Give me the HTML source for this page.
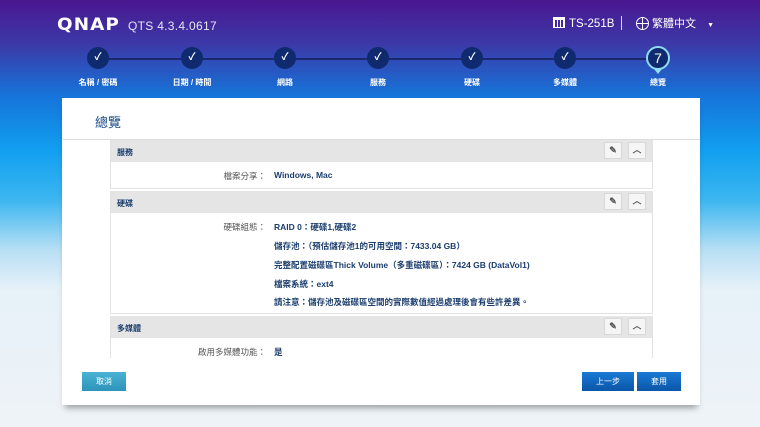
<!DOCTYPE html>
<html><head><meta charset="utf-8"><style>
*{margin:0;padding:0;box-sizing:border-box}
body{width:760px;height:427px;overflow:hidden;position:relative;font-family:"Liberation Sans","Noto Sans CJK TC",sans-serif;
background:linear-gradient(180deg,#4a1690 0px,#3b3aa8 45px,#1673d9 95px,#119ff0 150px,#3cb6f0 200px,#b8dff4 250px,#e6f1f8 290px,#eef3f7 427px)}
.logo{position:absolute;left:57px;top:15px;color:#fff;font-weight:900;font-size:17px;letter-spacing:1px;font-family:"DejaVu Sans",sans-serif;transform:scaleX(1.08);transform-origin:left}
.ver{position:absolute;left:128px;top:19px;color:#e6e6f5;font-size:12px;letter-spacing:.3px}
.model{position:absolute;left:553px;top:17px;color:#fff;font-size:11.5px}
.sep{position:absolute;left:621px;top:16px;width:1px;height:14px;background:#ddd}
.lang{position:absolute;left:636px;top:15px;color:#fff;font-size:11px}
.line{position:absolute;top:58px;left:98px;width:560px;height:2px;background:#1a2870}
.c{position:absolute;top:47px;width:22px;height:22px;border-radius:50%;background:#0f2a6e;color:#fff;text-align:center;font-size:10px;font-weight:bold;line-height:22px}
.lbl{position:absolute;top:77px;width:80px;text-align:center;color:#fff;font-size:8px;font-weight:bold}
.panel{position:absolute;left:62px;top:98px;width:638px;height:307px;background:#fff;box-shadow:0 6px 6px -3px rgba(0,0,0,.35)}
.title{position:absolute;left:95px;top:112px;color:#1c4d86;font-size:13px}
.hl{position:absolute;left:62px;top:139px;width:638px;height:1px;background:#ddd}
.sec{position:absolute;left:110px;width:543px;border:1px solid #e2e2e2;border-top:none;background:#fff}
.sh{height:22px;background:#e5e5e5;color:#1c3e6e;font-size:8px;font-weight:bold;padding:7px 6px;position:relative}
.b{position:absolute;top:2px;width:18px;height:17px;background:#f5f5f5;border:1px solid #d8d8d8;color:#555;font-size:9px;text-align:center;line-height:15px}
.row{position:absolute;font-size:8.5px;color:#1c3e6e;font-weight:bold}
.k{position:absolute;font-size:8.5px;color:#555;text-align:right;width:160px}
.btn{position:absolute;top:372px;height:19px;color:#fff;font-size:8px;text-align:center;line-height:19px}
</style></head><body>
<div class="logo">QNAP</div>
<div class="ver">QTS 4.3.4.0617</div>
<div class="model"><span style="display:inline-block;width:12px;height:11px;border:1.5px solid #fff;border-top-width:3px;vertical-align:-1px;margin-right:4px;background:repeating-linear-gradient(90deg,#fff 0 1px,transparent 1px 3px)"></span>TS-251B</div>
<div class="sep"></div>
<div class="lang"><span style="display:inline-block;width:13px;height:13px;border-radius:50%;border:1.5px solid #fff;vertical-align:-3px;margin-right:3px;background:linear-gradient(#fff,#fff) center/100% 1px no-repeat,linear-gradient(90deg,#fff,#fff) center/1px 100% no-repeat"></span>繁體中文 <span style="margin-left:8px;font-size:7px">▼</span></div>
<div class="line"></div>
<div class="c" style="left:87px">✓</div><div class="c" style="left:181px">✓</div><div class="c" style="left:274px">✓</div><div class="c" style="left:367px">✓</div><div class="c" style="left:461px">✓</div><div class="c" style="left:554px">✓</div>
<div class="c" style="left:646px;top:46px;width:24px;height:24px;line-height:20px;border:2px solid #8fdcf5;font-size:14px;font-weight:normal">7</div>
<div style="position:absolute;left:654px;top:69px;border:4px solid transparent;border-top:5px solid #8fdcf5"></div>
<div class="lbl" style="left:58px">名稱 / 密碼</div><div class="lbl" style="left:152px">日期 / 時間</div><div class="lbl" style="left:245px">網路</div><div class="lbl" style="left:338px">服務</div><div class="lbl" style="left:432px">硬碟</div><div class="lbl" style="left:525px">多媒體</div><div class="lbl" style="left:618px">總覽</div>
<div class="panel"></div>
<div class="title">總覽</div>
<div class="hl"></div>
<div class="sec" style="top:140px;height:49px"><div class="sh">服務<div class="b" style="left:493px">✎</div><div class="b" style="left:517px">︿</div></div></div>
<div class="sec" style="top:191px;height:123px"><div class="sh">硬碟<div class="b" style="left:493px">✎</div><div class="b" style="left:517px">︿</div></div></div>
<div class="sec" style="top:316px;height:42px;border-bottom:none"><div class="sh">多媒體<div class="b" style="left:493px">✎</div><div class="b" style="left:517px">︿</div></div></div>
<div class="k" style="left:106px;top:170px">檔案分享：</div><div class="row" style="left:274px;top:170px">Windows, Mac</div>
<div class="k" style="left:106px;top:221px">硬碟組態：</div><div class="row" style="left:274px;top:221px">RAID 0：硬碟1,硬碟2</div>
<div class="row" style="left:274px;top:240px">儲存池：（預估儲存池1的可用空間：7433.04 GB）</div>
<div class="row" style="left:274px;top:259px">完整配置磁碟區Thick Volume（多重磁碟區）：7424 GB (DataVol1)</div>
<div class="row" style="left:274px;top:278px">檔案系統：ext4</div>
<div class="row" style="left:274px;top:296px">請注意：儲存池及磁碟區空間的實際數值經過處理後會有些許差異。</div>
<div class="k" style="left:106px;top:346px">啟用多媒體功能：</div><div class="row" style="left:274px;top:346px">是</div>
<div class="btn" style="left:82px;width:44px;background:linear-gradient(#4ab3d4,#2d93bb)">取消</div>
<div class="btn" style="left:582px;width:52px;background:linear-gradient(#1a7ad4,#0b56a8)">上一步</div>
<div class="btn" style="left:637px;width:44px;background:linear-gradient(#1a7ad4,#0b56a8)">套用</div>
</body></html>
